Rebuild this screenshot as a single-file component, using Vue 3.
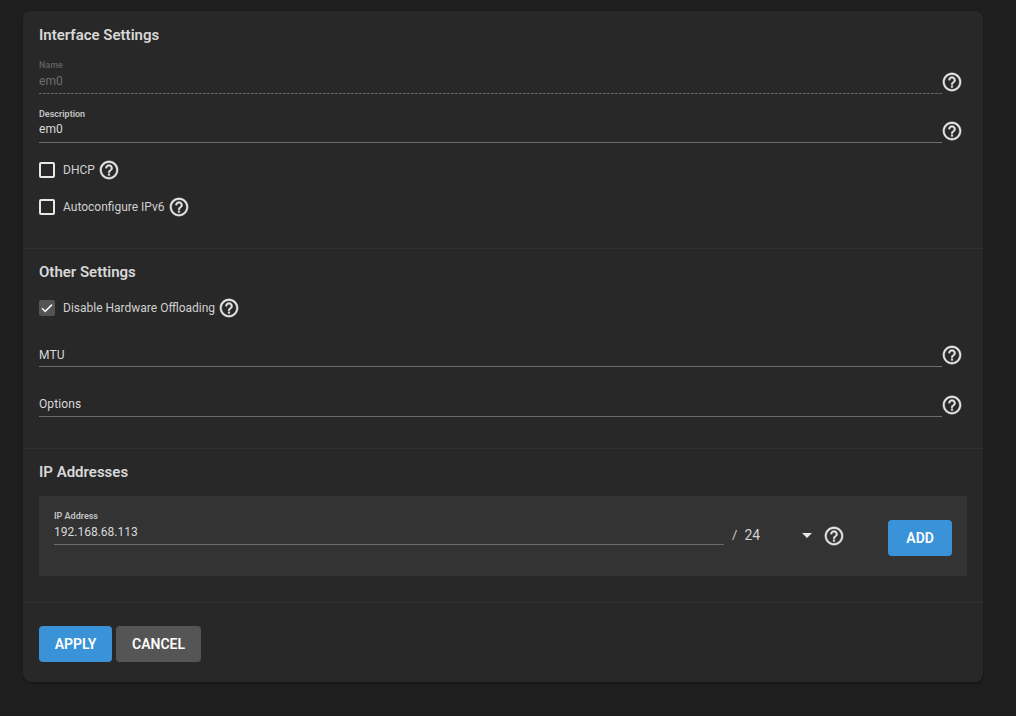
<script setup>
const help = "M11 18h2v-2h-2v2zm1-16C6.48 2 2 6.48 2 12s4.48 10 10 10 10-4.48 10-10S17.52 2 12 2zm0 18c-4.41 0-8-3.59-8-8s3.59-8 8-8 8 3.59 8 8-3.59 8-8 8zm0-14c-2.21 0-4 1.79-4 4h2c0-1.1.9-2 2-2s2 .9 2 2c0 2-3 1.75-3 5h2c0-2.25 3-2.5 3-5 0-2.21-1.79-4-4-4z"
</script>

<template>
  <div class="page">
    <form class="card" @submit.prevent>
      <section class="sec sec-one">
        <h2>Interface Settings</h2>
        <div class="field disabled">
          <div class="control">
            <label>Name</label>
            <div class="value">em0</div>
          </div>
          <svg class="help" viewBox="0 0 24 24"><path :d="help" /></svg>
        </div>
        <div class="field">
          <div class="control">
            <label>Description</label>
            <div class="value">em0</div>
          </div>
          <svg class="help" viewBox="0 0 24 24"><path :d="help" /></svg>
        </div>
        <div class="check first">
          <span class="box"></span>
          <span class="text">DHCP</span>
          <svg class="help" viewBox="0 0 24 24"><path :d="help" /></svg>
        </div>
        <div class="check second">
          <span class="box"></span>
          <span class="text">Autoconfigure IPv6</span>
          <svg class="help" viewBox="0 0 24 24"><path :d="help" /></svg>
        </div>
      </section>

      <section class="sec sec-two">
        <h2>Other Settings</h2>
        <div class="check third">
          <span class="box on">
            <svg viewBox="0 0 16 16"><path d="M3 8.2l3.2 3.2L13 4.6" /></svg>
          </span>
          <span class="text">Disable Hardware Offloading</span>
          <svg class="help" viewBox="0 0 24 24"><path :d="help" /></svg>
        </div>
        <div class="field plain mtu">
          <div class="control">
            <div class="value">MTU</div>
          </div>
          <svg class="help" viewBox="0 0 24 24"><path :d="help" /></svg>
        </div>
        <div class="field plain options">
          <div class="control">
            <div class="value">Options</div>
          </div>
          <svg class="help" viewBox="0 0 24 24"><path :d="help" /></svg>
        </div>
      </section>

      <section class="sec sec-three">
        <h2>IP Addresses</h2>
        <div class="ip-row">
          <div class="control ip">
            <label>IP Address</label>
            <div class="value">192.168.68.113</div>
          </div>
          <span class="slash">/</span>
          <span class="mask">24</span>
          <span class="caret"></span>
          <svg class="help" viewBox="0 0 24 24"><path :d="help" /></svg>
          <button type="button" class="btn primary add">ADD</button>
        </div>
      </section>

      <div class="actions">
        <button type="button" class="btn primary apply">APPLY</button>
        <button type="button" class="btn cancel">CANCEL</button>
      </div>
    </form>
  </div>
</template>

<style>
html, body { margin: 0; background: #1e1e1e; }
</style>

<style scoped>
.page {
  width: 1016px;
  height: 716px;
  box-sizing: border-box;
  padding: 11px 33px 0 23px;
  background: #1e1e1e;
  font-family: Roboto, "Liberation Sans", sans-serif;
  overflow: hidden;
}
.card {
  height: 671px;
  background: #282828;
  border-radius: 8px;
  box-shadow: 0 1px 2px rgba(0, 0, 0, 0.35);
  display: flex;
  flex-direction: column;
}
.sec {
  box-sizing: border-box;
  padding: 0 16px;
  border-bottom: 1px solid #313131;
}
.sec-one { height: 238px; padding-top: 14px; }
.sec-two { height: 200px; padding-top: 14px; }
.sec-three { height: 154px; padding-top: 14px; }
h2 {
  margin: 0;
  font-size: 15px;
  line-height: 18px;
  font-weight: 600;
  color: #d8d8d8;
}
.sec-one h2 { margin-top: 1px; }
.field {
  display: flex;
  align-items: flex-end;
  height: 49px;
}
.sec-one .field.disabled { margin-top: 1px; }
.control {
  flex: 1;
  min-width: 0;
  height: 37px;
  box-sizing: border-box;
  border-bottom: 1px solid #6c6c6c;
  display: flex;
  flex-direction: column;
  justify-content: flex-end;
}
label {
  font-size: 9px;
  line-height: 12px;
  font-weight: 600;
  color: #c4c4c4;
}
.value {
  font-size: 12px;
  line-height: 19px;
  padding-bottom: 3px;
  color: #d8d8d8;
  letter-spacing: 0.1px;
}
.disabled label { color: #5e5e5e; }
.disabled .value { color: #6e6e6e; line-height: 20px; padding-bottom: 2px; }
.disabled .control {
  border-bottom: 1px solid transparent;
  background: repeating-linear-gradient(90deg, #666 0 3px, transparent 3px 4px) bottom / 100% 1px no-repeat;
  background-clip: border-box;
  background-origin: border-box;
}
.help {
  width: 22px;
  height: 22px;
  fill: #e2e2e2;
  stroke: #e2e2e2;
  stroke-width: 0.35;
  flex: none;
}
.field > .help {
  margin: 0 4px 1px -1px;
}
.check {
  display: flex;
  align-items: center;
  height: 20px;
}
.check.first { margin-top: 17px; }
.check.second { margin-top: 17px; }
.check.third { margin-top: 17px; }
.box {
  width: 16px;
  height: 16px;
  box-sizing: border-box;
  border: 2px solid #e6e6e6;
  border-radius: 2px;
  margin-right: 8px;
  flex: none;
}
.box.on {
  background: #545454;
  border: none;
}
.box.on svg {
  display: block;
  width: 16px;
  height: 16px;
  fill: none;
  stroke: #f2f2f2;
  stroke-width: 1.5;
}
.text {
  font-size: 12px;
  line-height: 16px;
  color: #d0d0d0;
  margin-right: 3px;
}
.field.plain.mtu { margin-top: 8px; height: 41px; }
.field.plain.options { margin-top: 9px; height: 41px; }
.plain .control { height: 30px; }
.plain .value { line-height: 18px; padding-bottom: 2px; }
.options .value { padding-bottom: 3px; }
.ip-row {
  margin-top: 15px;
  height: 80px;
  box-sizing: border-box;
  padding: 0 15px;
  background: #333333;
  display: flex;
  align-items: flex-start;
}
.ip {
  flex: none;
  width: 670px;
  height: 38px;
  margin-top: 11px;
}
.ip .value { letter-spacing: 0; line-height: 20px; padding-bottom: 2px; }
.slash, .mask {
  font-size: 14px;
  line-height: 20px;
  color: #d0d0d0;
  margin-top: 29px;
}
.slash { margin-left: 8px; font-size: 13px; }
.mask { margin-left: 7px; width: 58px; }
.caret {
  width: 0;
  height: 0;
  margin-top: 37px;
  border-left: 5px solid transparent;
  border-right: 5px solid transparent;
  border-top: 5px solid #e6e6e6;
}
.ip-row .help { margin: 29px 0 0 11px; }
.btn {
  height: 36px;
  border: none;
  border-radius: 4px;
  padding: 0;
  font-family: inherit;
  font-size: 14px;
  font-weight: 600;
  color: #ffffff;
}
.primary { background: #3a93d8; }
.add { width: 64px; margin: 24px 0 0 43px; }
.actions {
  display: flex;
  gap: 4px;
  padding: 23px 16px 0;
}
.apply { width: 73px; }
.cancel { width: 85px; background: #555555; }
</style>
